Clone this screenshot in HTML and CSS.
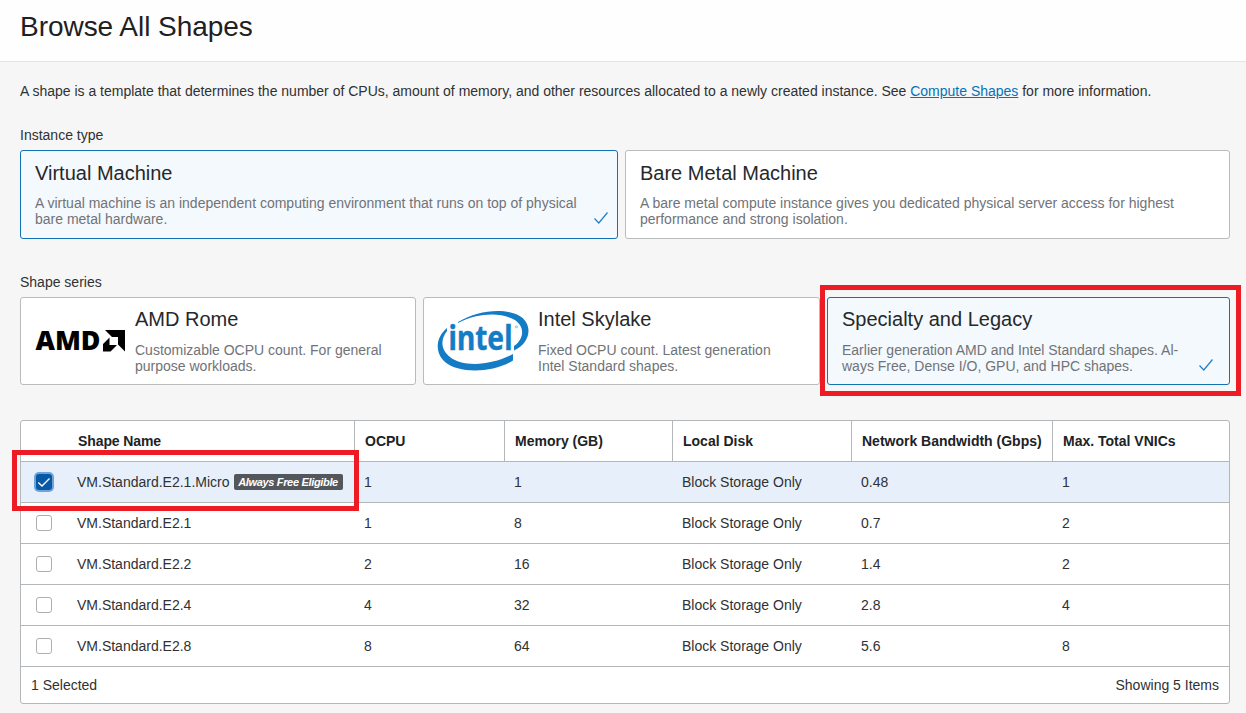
FILE: index.html
```html
<!DOCTYPE html>
<html lang="en">
<head>
<meta charset="utf-8">
<title>Browse All Shapes</title>
<link rel="stylesheet" href="styles.css">
</head>
<body>
<header class="page-header"><h1>Browse All Shapes</h1></header>
<main class="content">
  <p class="intro">A shape is a template that determines the number of CPUs, amount of memory, and other resources allocated to a newly created instance. See <a href="#">Compute Shapes</a> for more information.</p>

  <h2 class="label">Instance type</h2>
  <div class="cards types">
    <section class="card selected">
      <div class="card-body">
        <h3>Virtual Machine</h3>
        <p>A virtual machine is an independent computing environment that runs on top of physical<br>bare metal hardware.</p>
      </div>
      <svg class="tick" width="16" height="14" viewBox="0 0 16 14"><path d="M1.5 7.5 5.8 12 14.5 1.5"/></svg>
    </section>
    <section class="card">
      <div class="card-body">
        <h3>Bare Metal Machine</h3>
        <p>A bare metal compute instance gives you dedicated physical server access for highest<br>performance and strong isolation.</p>
      </div>
    </section>
  </div>

  <h2 class="label series-label">Shape series</h2>
  <div class="cards series">
    <section class="card">
      <svg class="logo" width="90" height="60" viewBox="0 0 90 60">
        <text class="amd-text" x="0.5" y="39" textLength="65" lengthAdjust="spacingAndGlyphs">AMD</text>
        <path d="M70 19H90V40.5L83 33.5V26H77Z"/>
        <path d="M74.5 26.5 68 33V40.5H75.5L82 34H74.5Z"/>
      </svg>
      <div class="card-body">
        <h3>AMD Rome</h3>
        <p>Customizable OCPU count. For general<br>purpose workloads.</p>
      </div>
    </section>
    <section class="card">
      <svg class="logo" width="90" height="60" viewBox="0 0 90 60">
        <g class="intel">
          <path d="M20 11C40 -1 65-3 80 4C96 12 93 32 76 39.500V35C86 28 88 15 75 8C61 1 39 2 20 12Z"/>
          <path d="M9 17C-3 27-3 42 7 51C21 63 55 62 75 49.500V43C56 54 25 57 12 46C3 39 2 29 9 20Z"/>
          <text class="intel-text" x="10.500" y="39" textLength="64" lengthAdjust="spacingAndGlyphs">intel</text>
          <circle class="mark" cx="78.500" cy="15.800" r="1.600"/>
        </g>
      </svg>
      <div class="card-body">
        <h3>Intel Skylake</h3>
        <p>Fixed OCPU count. Latest generation<br>Intel Standard shapes.</p>
      </div>
    </section>
    <section class="card selected">
      <div class="card-body">
        <h3>Specialty and Legacy</h3>
        <p>Earlier generation AMD and Intel Standard shapes. Al-<br>ways Free, Dense I/O, GPU, and HPC shapes.</p>
      </div>
      <svg class="tick" width="16" height="14" viewBox="0 0 16 14"><path d="M1.5 7.5 5.8 12 14.5 1.5"/></svg>
      <div class="callout callout-series"></div>
    </section>
  </div>

  <div class="table">
    <div class="row head">
      <div class="name">Shape Name</div><div>OCPU</div><div>Memory (GB)</div><div>Local Disk</div><div>Network Bandwidth (Gbps)</div><div>Max. Total VNICs</div>
    </div>
    <div class="row active">
      <div class="name"><span class="box checked"><svg width="16" height="16" viewBox="0 0 16 16"><path d="M2.3 8.6 6 12 13.5 4.5"/></svg></span>VM.Standard.E2.1.Micro<span class="badge">Always Free Eligible</span></div><div>1</div><div>1</div><div>Block Storage Only</div><div>0.48</div><div>1</div>
      <div class="callout callout-row"></div>
    </div>
    <div class="row">
      <div class="name"><span class="box"></span>VM.Standard.E2.1</div><div>1</div><div>8</div><div>Block Storage Only</div><div>0.7</div><div>2</div>
    </div>
    <div class="row">
      <div class="name"><span class="box"></span>VM.Standard.E2.2</div><div>2</div><div>16</div><div>Block Storage Only</div><div>1.4</div><div>2</div>
    </div>
    <div class="row">
      <div class="name"><span class="box"></span>VM.Standard.E2.4</div><div>4</div><div>32</div><div>Block Storage Only</div><div>2.8</div><div>4</div>
    </div>
    <div class="row">
      <div class="name"><span class="box"></span>VM.Standard.E2.8</div><div>8</div><div>64</div><div>Block Storage Only</div><div>5.6</div><div>8</div>
    </div>
    <div class="foot"><span>1 Selected</span><span>Showing 5 Items</span></div>
  </div>
</main>
</body>
</html>
```
FILE: styles.css
```css
* { box-sizing: border-box; }
body {
  margin: 0;
  height: 713px;
  overflow: hidden;
  background: #f6f6f6;
  color: #2f3133;
  font: 14px/16px "Liberation Sans", Arial, sans-serif;
}
h1, h2, h3, p { margin: 0; font-weight: 400; }
.page-header {
  height: 62px;
  padding: 11px 20px 0;
  background: #fefefe;
  border-bottom: 1px solid #e3e4e5;
}
h1 { font-size: 28px; line-height: 32px; color: #1f2022; letter-spacing: -0.04px; }
.content { padding: 21px 16px 0 20px; }
.intro { letter-spacing: -0.004px; }
a { color: #0572b8; }
.label { font-size: 14px; line-height: 16px; margin-top: 28px; }
.series-label { margin-top: 35px; }
.cards { display: grid; gap: 7px; margin-top: 7px; }
.types { grid-template-columns: 598px 605px; }
.series { grid-template-columns: 396px 397px 403px; }
.card {
  position: relative;
  display: flex;
  height: 89px;
  padding: 10px 14px;
  background: #fff;
  border: 1px solid #b9bbbd;
  border-radius: 3px;
}
.series .card { height: 88px; }
.selected { background: #f4f9fe; border-color: #1272b5; }
h3 { font-size: 20px; line-height: 24px; color: #26282b; }
.series h3 { margin-top: -1px; }
.card p { margin-top: 10px; color: #707377; white-space: nowrap; }
.series .card p { margin-top: 11px; }
.tick { position: absolute; right: 8px; bottom: 13px; }
.tick path { fill: none; stroke: #1c7fce; stroke-width: 1.2; }
.series .tick { right: 15px; bottom: 12px; }
.logo { flex: none; margin: 3px 10px 0 0; overflow: visible; }
.amd-text { font: 800 26px "Open Sans", sans-serif; }
.intel { fill: #147cc5; }
.intel-text { font: 700 34px "Noto Sans", sans-serif; stroke: #147cc5; stroke-width: 0.4; }
.mark { fill: #a9cfea; }
.callout { position: absolute; border: 5px solid #ed1c24; pointer-events: none; }
.callout-series { left: -8px; top: -13px; width: 421px; height: 111px; }

.table {
  width: 1210px;
  margin-top: 35px;
  background: #fff;
  border: 1px solid #b4b7ba;
  border-radius: 3px;
}
.row {
  position: relative;
  display: grid;
  grid-template-columns: 334px 150px 168px 179px 201px 176px;
  height: 41px;
  line-height: 40px;
  border-bottom: 1px solid #b4b7ba;
}
.row > div:not(.callout) { padding-left: 9px; white-space: nowrap; }
.row > .name:not(.callout) { display: flex; align-items: center; padding-left: 15px; }
.head { font-weight: 700; color: #202224; }
.head > div:not(.callout) { padding-left: 10px; border-right: 1px solid #b4b7ba; }
.head > div:last-child { border-right: 0; }
.head > .name:not(.callout) { padding-left: 57px; letter-spacing: -0.1px; }
.active { background: #e7f0fa; }
.box {
  width: 16px;
  height: 16px;
  margin-right: 25px;
  background: #fff;
  border: 1px solid #adb0b3;
  border-radius: 3px;
}
.checked { display: flex; border: 0; background: #0759a6; box-shadow: 0 0 0 2px #6da3dc; }
.checked path { fill: none; stroke: #fff; stroke-width: 1.4; }
.badge {
  width: 109px;
  height: 16px;
  margin-left: 4px;
  background: #53575c;
  border-radius: 2px;
  color: #fff;
  font: italic 700 11px/16px "Liberation Sans", Arial, sans-serif;
  letter-spacing: -0.33px;
  text-align: center;
}
.callout-row { left: -9px; top: -12px; width: 347px; height: 61px; }
.foot { display: flex; justify-content: space-between; height: 36px; padding: 0 10px; line-height: 36px; }
```
